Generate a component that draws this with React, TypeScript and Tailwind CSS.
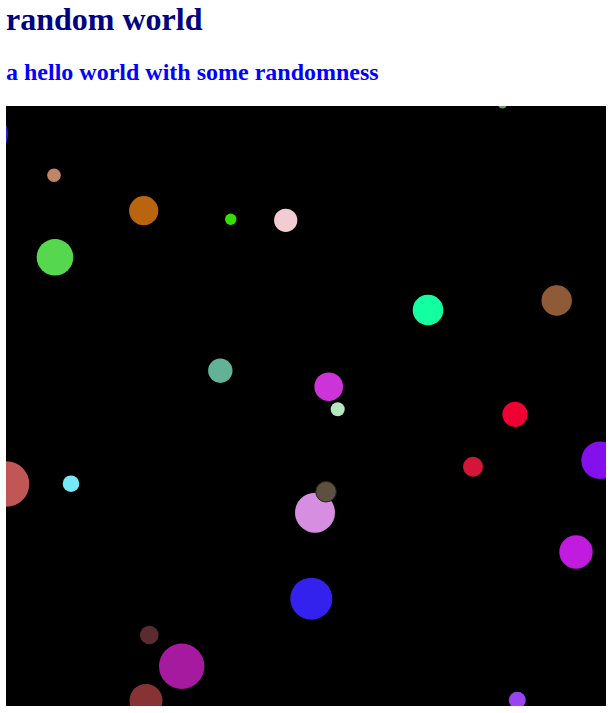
const dots = [
  { x: -18, y: 134, r: 26, c: "#2424d0" },
  { x: 502.5, y: 104, r: 4.5, c: "#6a9a6e" },
  { x: 54, y: 175.3, r: 6.8, c: "#c08468" },
  { x: 143.7, y: 210.7, r: 14.6, c: "#b9640e" },
  { x: 230.7, y: 219.3, r: 5.7, c: "#33e000" },
  { x: 285.7, y: 220.3, r: 11.6, c: "#f2cbd3" },
  { x: 55, y: 257.3, r: 18.3, c: "#55d84d" },
  { x: 428, y: 310, r: 15.3, c: "#14ffa0" },
  { x: 556.7, y: 300.5, r: 15.2, c: "#8f5a37" },
  { x: 220.3, y: 370.7, r: 12.2, c: "#62b297" },
  { x: 328.7, y: 386.7, r: 14.3, c: "#cc33d8" },
  { x: 337.7, y: 409.3, r: 7, c: "#b8e6bf" },
  { x: 515, y: 414.3, r: 12.6, c: "#ee0033" },
  { x: 473, y: 466.7, r: 10, c: "#d41538" },
  { x: 600, y: 460.3, r: 18.7, c: "#8510ee" },
  { x: 6.5, y: 484, r: 22.8, c: "#c05656" },
  { x: 71, y: 483.7, r: 8.3, c: "#77e8f8" },
  { x: 315, y: 512.7, r: 20, c: "#d68ee0" },
  { x: 326, y: 491.7, r: 10.3, c: "#5e5040", s: "#2a2218" },
  { x: 576, y: 552, r: 16.7, c: "#c01bdf" },
  { x: 311.3, y: 598.7, r: 21, c: "#3322ee" },
  { x: 149.3, y: 635, r: 9.3, c: "#5a2b30" },
  { x: 181.7, y: 666.3, r: 22.7, c: "#a61aa0" },
  { x: 146, y: 700.5, r: 16.5, c: "#883333" },
  { x: 517.3, y: 700.2, r: 8.5, c: "#9944ee" },
];

export default function App() {
  return (
    <div className="bg-white pl-[6px] pt-[1px] font-['Liberation_Serif','Times_New_Roman',serif]">
      <h1 className="text-[32px] leading-[36px] font-bold text-[#000080]">
        random world
      </h1>
      <h2 className="mt-[22px] text-[24px] leading-[27px] font-bold text-[#0000ff]">
        a hello world with some randomness
      </h2>
      <svg
        width="600"
        height="600"
        viewBox="0 106 600 600"
        className="mt-[20px] block bg-black"
      >
        {dots.map((d, i) => (
          <circle
            key={i}
            cx={d.x - 6}
            cy={d.y}
            r={d.r}
            fill={d.c}
            stroke={d.s ?? "none"}
            strokeWidth={d.s ? 1 : 0}
          />
        ))}
      </svg>
    </div>
  );
}
